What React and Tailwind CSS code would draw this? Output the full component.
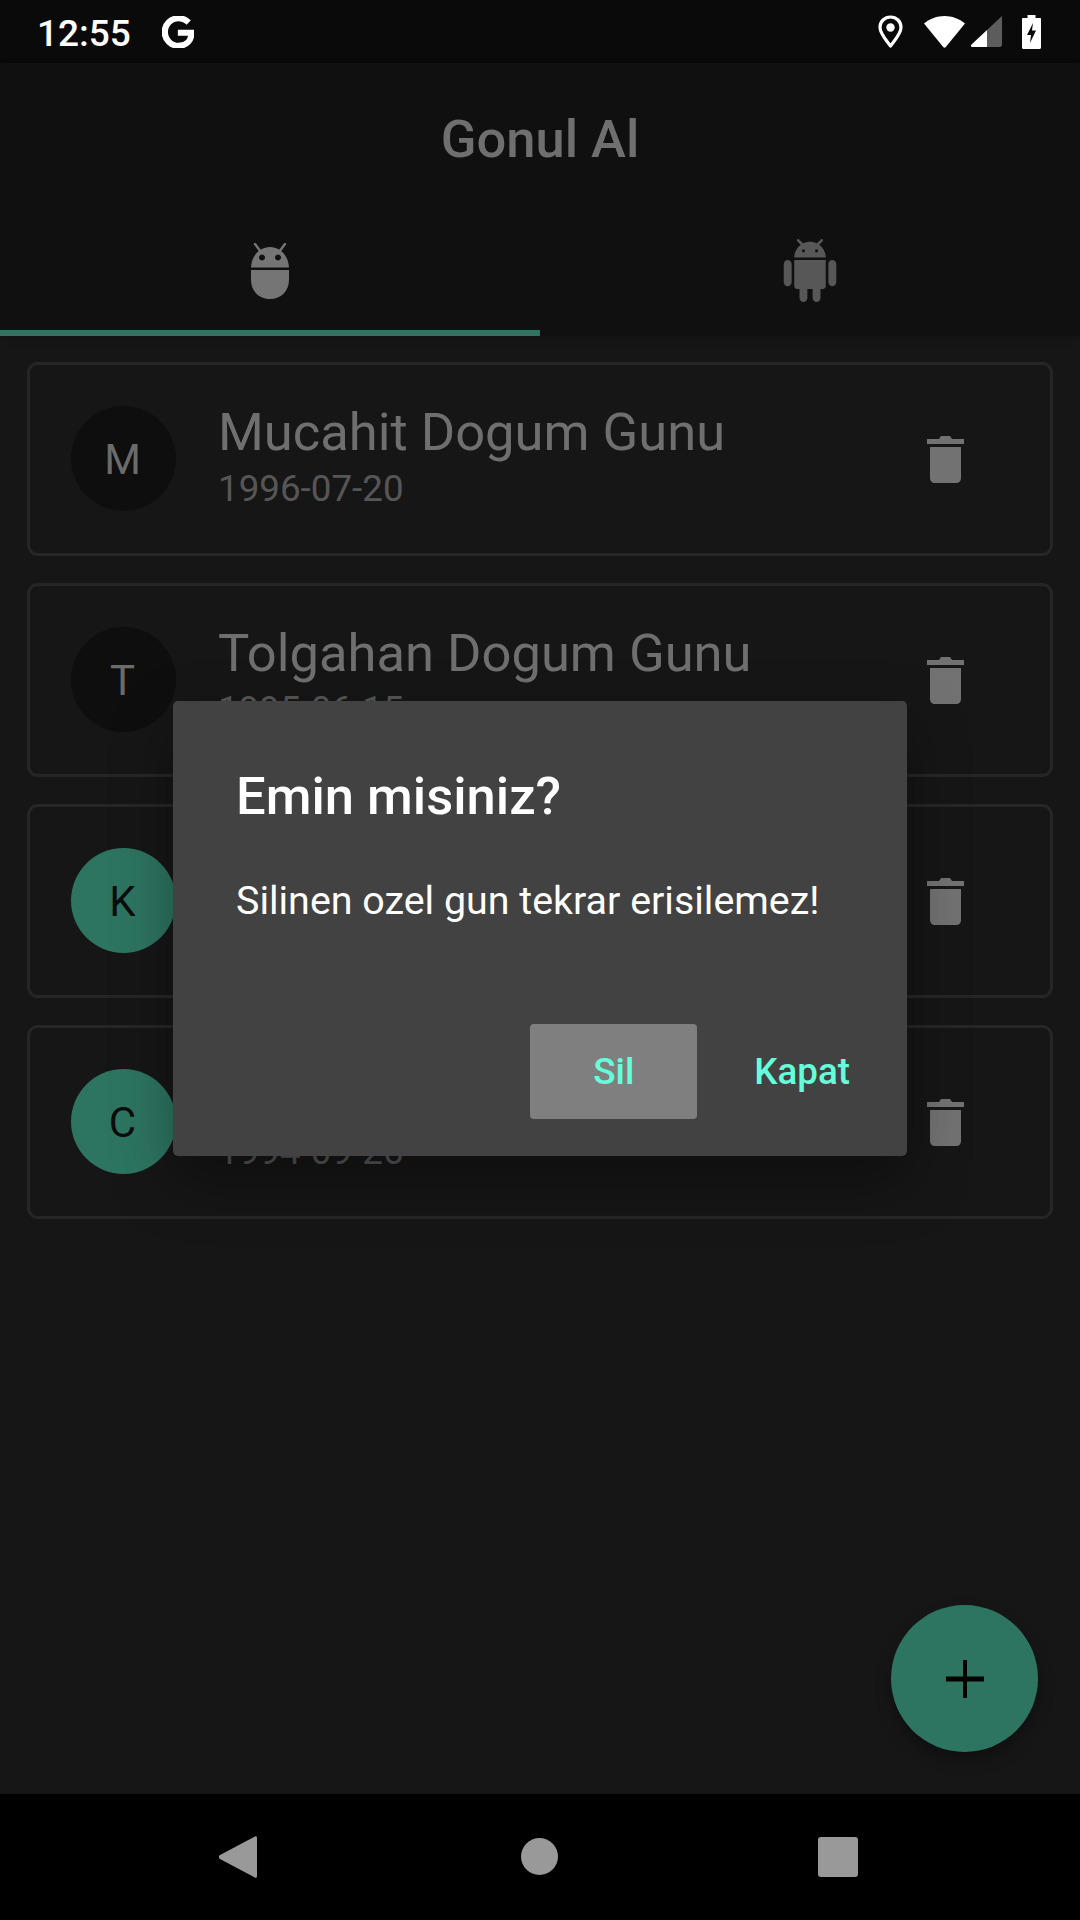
import React from 'react';
import { SiGoogle } from 'react-icons/si';

const events = [
  { letter: 'M', name: 'Mucahit Dogum Gunu', date: '1996-07-20', active: false },
  { letter: 'T', name: 'Tolgahan Dogum Gunu', date: '1995-06-15', active: false },
  { letter: 'K', name: '', date: '', active: true },
  { letter: 'C', name: '', date: '1994-09-26', active: true },
];

function AndroidHead() {
  return (
    <svg width="38" height="56" viewBox="0 0 38 56" className="text-[#757575]">
      <path d="M4 1 L10 9 M34 1 L28 9" stroke="currentColor" strokeWidth="2.4" strokeLinecap="round" />
      <path fillRule="evenodd" fill="currentColor" d="M0 25 C0 14 8 4 19 4 C30 4 38 14 38 25 L38 24.5 L0 24.5 Z M11 11.5 a3 3 0 1 0 .01 0 Z M27 11.5 a3 3 0 1 0 .01 0 Z" />
      <path fill="currentColor" d="M0 27 H38 V37 C38 48 30 56 19 56 C8 56 0 48 0 37 Z" />
    </svg>
  );
}

function AndroidFull() {
  return (
    <svg width="54" height="63" viewBox="2 0 20 24" fill="#575757">
      <path d="M6 18c0 .55.45 1 1 1h1v3.5c0 .83.67 1.5 1.5 1.5s1.5-.67 1.5-1.5V19h2v3.5c0 .83.67 1.5 1.5 1.5s1.5-.67 1.5-1.5V19h1c.55 0 1-.45 1-1V8H6v10zM3.5 8C2.67 8 2 8.67 2 9.5v7c0 .83.67 1.5 1.5 1.5S5 17.33 5 16.5v-7C5 8.67 4.33 8 3.5 8zm17 0c-.83 0-1.5.67-1.5 1.5v7c0 .83.67 1.5 1.5 1.5s1.5-.67 1.5-1.5v-7c0-.83-.67-1.5-1.5-1.5zm-4.97-5.84l1.3-1.3c.2-.2.2-.51 0-.71-.2-.2-.51-.2-.71 0l-1.48 1.48C13.85 1.23 12.95 1 12 1c-.96 0-1.86.23-2.66.63L7.85.15c-.2-.2-.51-.2-.71 0-.2.2-.2.51 0 .71l1.31 1.31C6.97 3.26 6 5.01 6 7h12c0-1.99-.97-3.75-2.47-4.84zM10 5H9V4h1v1zm5 0h-1V4h1v1z" />
    </svg>
  );
}

function Trash() {
  return (
    <svg width="37" height="47" viewBox="0 0 37 47" fill="#727272">
      <path d="M0 3 H12 L14 0 H23 L25 3 H37 V8 H0 Z" />
      <path d="M3 11 H34 V42 C34 45 32 47 29 47 H8 C5 47 3 45 3 42 Z" />
    </svg>
  );
}

function StatusIcons() {
  return (
    <div className="flex items-center">
      <svg width="25" height="34" viewBox="0 0 25 34" fill="none" className="mr-[21px]">
        <path d="M12.5 31 C8 25 2 18.500 2 12.500 C2 6.500 6.500 2 12.500 2 C18.500 2 23 6.500 23 12.500 C23 18.500 17 25 12.500 31 Z" stroke="white" strokeWidth="3.2" strokeLinejoin="round" />
        <circle cx="12.5" cy="12.500" r="4.200" fill="white" />
      </svg>
      <svg width="41" height="32" viewBox="0 0 41 32" fill="white" className="mr-[6px]">
        <path d="M20.500 0 C28 0 35 2.700 41 7.500 L22 30.800 C21 32 20 32 19 30.800 L0 7.500 C6 2.700 13 0 20.500 0 Z" />
      </svg>
      <svg width="31" height="31" viewBox="0 0 31 31" className="mr-[20px]">
        <path fill="#5c5c5c" d="M31 0 V29 C31 30 30 31 29 31 H16 V14 Z" />
        <path fill="white" d="M16 14 V31 H1.500 C0 31 -.5 29.500 .5 28.500 Z" />
      </svg>
      <svg width="19" height="34" viewBox="0 0 19 34" fill="white">
        <path fillRule="evenodd" d="M5.500 0 H13.500 V3 H18 C18.600 3 19 3.400 19 4 V32.500 C19 33.400 18.400 34 17.500 34 H1.500 C.6 34 0 33.400 0 32.500 V4 C0 3.400 .4 3 1 3 H5.500 Z M11 8 L5 20 H9 L8 28 L14 15.500 H10 Z" />
      </svg>
    </div>
  );
}

function EventCard({ item }) {
  return (
    <div className="h-[194px] border-[3px] border-[#262626] rounded-[11px] pl-[41px] pr-[86px] pt-[41px] flex items-start">
      <div className={`w-[105px] h-[105px] rounded-full shrink-0 flex items-center justify-center pr-[2px] pt-[1px] text-[42px] ${item.active ? 'bg-[#2d7561] text-[#0c0c0c]' : 'bg-[#0e0e0e] text-[#6b6b6b]'}`}>
        {item.letter}
      </div>
      <div className="flex-1 ml-[42px] -mt-[5px]">
        <div className="h-[62px] text-[52.5px] leading-[62px] text-[#6f6f6f]">{item.name}</div>
        <div className="mt-[3px] text-[36.75px] leading-[46px] text-[#565656]">{item.date}</div>
      </div>
      <div className="mt-[30px]">
        <Trash />
      </div>
    </div>
  );
}

export default function App() {
  return (
    <div className="relative w-[1080px] h-[1920px] flex flex-col bg-[#161616] overflow-hidden font-['Roboto',sans-serif]">
      {/* status bar */}
      <div className="h-[63px] shrink-0 bg-[#0a0a0a] flex items-center justify-between pl-[37px] pr-[39px]">
        <div className="flex items-center text-white">
          <span className="mt-[3px] w-[95px] text-[37px] font-medium leading-none">12:55</span>
          <SiGoogle className="ml-[30px] w-[32px] h-[32px] stroke-white stroke-[1.2]" />
        </div>
        <StatusIcons />
      </div>

      {/* app bar + tabs */}
      <div className="h-[273px] shrink-0 bg-[#101010] flex flex-col shadow-[0_3px_8px_rgba(0,0,0,0.12)] z-10">
        <div className="h-[147px] shrink-0 pt-[5px] flex items-center justify-center text-[52.5px] font-medium text-[#6f6f6f]">
          Gonul Al
        </div>
        <div className="h-[126px] flex">
          <div className="w-1/2 flex flex-col">
            <div className="flex-1 flex items-center justify-center pt-[2px]">
              <AndroidHead />
            </div>
            <div className="h-[6px] bg-[#2d7561]" />
          </div>
          <div className="w-1/2 flex items-start justify-center pt-[29px]">
            <AndroidFull />
          </div>
        </div>
      </div>

      {/* list */}
      <div className="flex-1 px-[27px] pt-[26px] flex flex-col gap-[27px]">
        {events.map((item) => (
          <EventCard key={item.letter} item={item} />
        ))}
      </div>

      {/* nav bar */}
      <div className="h-[126px] shrink-0 bg-black relative">
        <svg width="38" height="42" viewBox="0 0 38 42" fill="#999999" className="absolute left-[219px] top-[42px]">
          <path d="M38 2 V40 C38 42 36.500 42.500 35 41 L1 23 C-.5 22 -.5 20 1 19 L35 1 C36.500 -.5 38 0 38 2 Z" />
        </svg>
        <div className="absolute left-[521px] top-[44px] w-[37px] h-[37px] rounded-full bg-[#999999]" />
        <div className="absolute left-[818px] top-[43px] w-[40px] h-[40px] rounded-[3px] bg-[#999999]" />
      </div>

      {/* fab */}
      <div className="absolute left-[891px] top-[1605px] w-[147px] h-[147px] rounded-full bg-[#2d7561] shadow-[0_8px_16px_rgba(0,0,0,0.3)] flex items-center justify-center z-20">
        <svg width="38" height="38" viewBox="0 0 38 38" fill="#000000">
          <path d="M17 0 H21 V16.500 H38 V21.500 H21 V38 H17 V21.500 H0 V16.500 H17 Z" />
        </svg>
      </div>

      {/* dialog */}
      <div className="absolute left-[173px] top-[701px] w-[734px] h-[455px] bg-[#424242] rounded-[5px] shadow-[0_24px_60px_rgba(0,0,0,0.35)] flex flex-col pl-[63px] pr-[37px] z-20">
        <div className="mt-[64px] text-[52.5px] leading-[62px] font-medium text-white">Emin misiniz?</div>
        <div className="mt-[49px] text-[39.4px] leading-[50px] text-white">Silinen ozel gun tekrar erisilemez!</div>
        <div className="mt-auto mb-[37px] flex justify-end items-center text-[36.75px] font-medium text-[#64ffda]">
          <div className="w-[167px] h-[95px] rounded-[4px] bg-[#7f7f7f] flex items-center justify-center">Sil</div>
          <div className="ml-[57px] mr-[20px]">Kapat</div>
        </div>
      </div>
    </div>
  );
}
